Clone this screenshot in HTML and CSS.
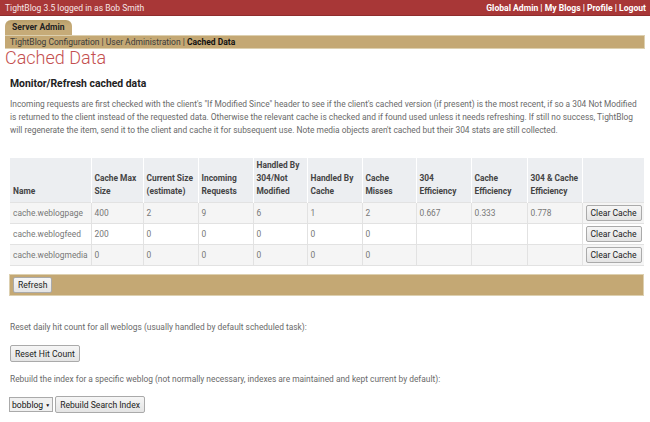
FILE: index.html
```html
<!DOCTYPE html>
<html>
<head>
<meta charset="utf-8">
<link rel="stylesheet" href="styles.css">
</head>
<body>
<div class="topbar">
  <span class="brand">TightBlog 3.5 logged in as Bob Smith</span>
  <span class="toplinks">Global Admin | My Blogs | Profile | Logout</span>
</div>
<div class="tabs">
  <div class="tab">Server Admin</div>
</div>
<div class="subnav">TightBlog Configuration | User Administration | <b>Cached Data</b></div>
<h1 class="title">Cached Data</h1>
<div class="content">
  <h2 class="subtitle">Monitor/Refresh cached data</h2>
  <p class="intro">Incoming requests are first checked with the client's "If Modified Since" header to see if the client's cached version (if present) is the most recent, if so a 304 Not Modified is returned to the client instead of the requested data. Otherwise the relevant cache is checked and if found used unless it needs refreshing. If still no success, TightBlog will regenerate the item, send it to the client and cache it for subsequent use. Note media objects aren't cached but their 304 stats are still collected.</p>
  <table class="stats">
    <colgroup>
      <col class="w81"><col class="w52"><col class="w55"><col class="w55"><col class="w54"><col class="w55"><col class="w54"><col class="w55"><col class="w56"><col class="w55"><col class="w62">
    </colgroup>
    <thead>
      <tr>
        <th>Name</th>
        <th>Cache Max Size</th>
        <th>Current Size (estimate)</th>
        <th>Incoming Requests</th>
        <th>Handled By 304/Not Modified</th>
        <th>Handled By Cache</th>
        <th>Cache Misses</th>
        <th>304 Efficiency</th>
        <th>Cache Efficiency</th>
        <th>304 &amp; Cache Efficiency</th>
        <th></th>
      </tr>
    </thead>
    <tbody>
      <tr class="odd">
        <td>cache.weblogpage</td><td>400</td><td>2</td><td>9</td><td>6</td><td>1</td><td>2</td><td>0.667</td><td>0.333</td><td>0.778</td>
        <td class="btncell"><button class="btn">Clear Cache</button></td>
      </tr>
      <tr>
        <td>cache.weblogfeed</td><td>200</td><td>0</td><td>0</td><td>0</td><td>0</td><td>0</td><td></td><td></td><td></td>
        <td class="btncell"><button class="btn">Clear Cache</button></td>
      </tr>
      <tr class="odd">
        <td>cache.weblogmedia</td><td>0</td><td>0</td><td>0</td><td>0</td><td>0</td><td>0</td><td></td><td></td><td></td>
        <td class="btncell"><button class="btn">Clear Cache</button></td>
      </tr>
    </tbody>
  </table>
  <div class="controlbar"><button class="btn">Refresh</button></div>
  <p class="note note-reset">Reset daily hit count for all weblogs (usually handled by default scheduled task):</p>
  <button class="btn btn-tall">Reset Hit Count</button>
  <p class="note note-rebuild">Rebuild the index for a specific weblog (not normally necessary, indexes are maintained and kept current by default):</p>
  <div class="rebuild">
    <span class="select">bobblog <span class="arrow">&#9660;</span></span>
    <button class="btn btn-tall">Rebuild Search Index</button>
  </div>
</div>
</body>
</html>
```

FILE: styles.css
```css
html, body {
  margin: 0;
  padding: 0;
  background: #fff;
}
body {
  font-family: Roboto, "Liberation Sans", sans-serif;
  color: #666;
}
.topbar {
  display: flex;
  justify-content: space-between;
  align-items: center;
  height: 15px;
  padding: 0 4px 0 5px;
  background: #a83737;
  border-bottom: 1px solid #8f2d2d;
  font-size: 8.5px;
  color: #f3dede;
}
.brand {
  color: #f6e6e6;
}
.toplinks {
  font-weight: bold;
  font-size: 8.6px;
  color: #fff;
}
.tabs {
  margin: 4px 5px 0;
  display: flex;
}
.tab {
  width: 60px;
  height: 15px;
  padding-left: 7px;
  line-height: 14px;
  font-size: 8.6px;
  font-weight: bold;
  color: #222;
  background: linear-gradient(#b89e6a, #c6ab78 40%);
  border-radius: 6px 6px 0 0;
}
.subnav {
  margin: 0 5px;
  height: 12px;
  padding-left: 5px;
  line-height: 12px;
  font-size: 8.5px;
  color: #3a3a3a;
  background: #c4a874;
  border: 1px solid #ddd0b0;
  border-left: none;
}
.subnav b {
  color: #111;
}
.title {
  margin: 0 0 0 5px;
  font-size: 18px;
  line-height: 18px;
  font-weight: 300;
  color: #c4504f;
}
.content {
  padding: 0 6px 0 10px;
}
.subtitle {
  margin: 10px 0 0;
  font-size: 10.4px;
  line-height: 14px;
  color: #222;
}
.intro {
  margin: 7px 0 0;
  font-size: 8.4px;
  line-height: 13px;
  color: #6a6a6a;
}
.stats {
  margin-top: 21px;
  width: 634px;
  table-layout: fixed;
  border-collapse: collapse;
  font-size: 8.4px;
}
.w81 { width: 81px; }
.w52 { width: 52px; }
.w54 { width: 54px; }
.w55 { width: 55px; }
.w56 { width: 56px; }
.w62 { width: 62px; }
.stats th {
  background: #eceef1;
  color: #444;
  font-weight: bold;
  text-align: left;
  vertical-align: bottom;
  padding: 0 3px 4px 3px;
  height: 40px;
  line-height: 13px;
  border-left: 1px solid #fff;
}
.stats th:first-child, .stats td:first-child {
  border-left: none;
}
.stats td {
  height: 20px;
  padding: 0 3px;
  color: #777;
  border-top: 1px solid #e2e2e2;
  border-left: 1px solid #e2e2e2;
  white-space: nowrap;
  overflow: hidden;
}
.stats tr.odd td {
  background: #f5f5f5;
}
.stats tbody tr:last-child td {
  border-bottom: 1px solid #e2e2e2;
}
.stats td.btncell {
  padding: 0 2px 0 3px;
}
.btn {
  font-family: Roboto, "Liberation Sans", sans-serif;
  font-size: 8.6px;
  color: #222;
  background: linear-gradient(#f6f6f6, #e4e4e4);
  border: 1px solid #aaa;
  border-radius: 2px;
  padding: 2px 4px;
  line-height: 10px;
  margin: 0;
  white-space: nowrap;
}
.btn-tall {
  padding: 3px 4px 2px;
}
.controlbar {
  margin-top: 8px;
  margin-left: -1px;
  background: #c4a874;
  border: 1px solid #ddd0b0;
  padding: 2px 3px;
  height: 16px;
  display: flex;
  align-items: center;
}
.note {
  margin: 25px 0 8px;
  font-size: 8.4px;
  line-height: 13px;
  color: #6a6a6a;
}
.note-rebuild {
  margin-top: 11px;
  margin-bottom: 10px;
}
.rebuild {
  display: flex;
  align-items: center;
  gap: 2px;
  margin-left: -1px;
}
.select {
  display: inline-flex;
  align-items: center;
  gap: 2px;
  height: 13px;
  padding: 0 2px;
  border: 1px solid #aaa;
  background: #f0f0f0;
  font-size: 8.6px;
  color: #111;
}
.arrow {
  font-size: 5px;
}
```
